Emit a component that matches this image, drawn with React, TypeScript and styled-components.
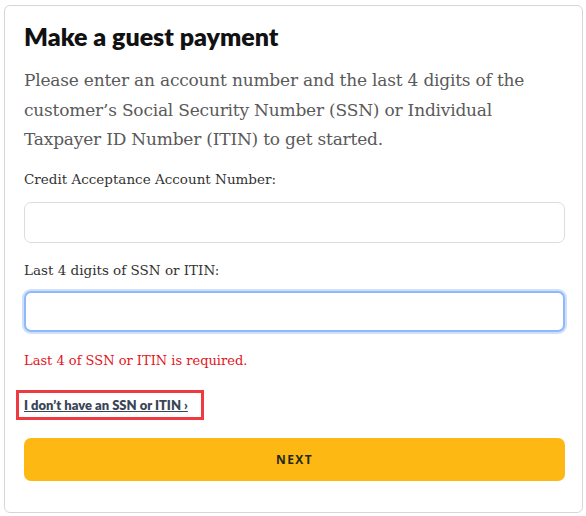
import React from 'react';
import styled, { createGlobalStyle } from 'styled-components';

const Global = createGlobalStyle`
  html, body { margin: 0; padding: 0; background: #ffffff; }
  * { box-sizing: border-box; }
`;

const Card = styled.div`
  width: 579px;
  height: 508px;
  margin: 5px 0 0 4px;
  border: 1px solid #d6d6d6;
  border-radius: 6px;
  padding: 15px 17px 0 19px;
  display: flex;
  flex-direction: column;
  background: #fff;
`;

const Title = styled.h1`
  margin: 0;
  font-family: 'Lato', 'Noto Sans', sans-serif;
  font-weight: 800;
  font-size: 25px;
  line-height: 30px;
  color: #111;
`;

const Intro = styled.p`
  margin: 15px 0 0 0;
  font-family: 'DejaVu Serif', 'Liberation Serif', serif;
  font-weight: 300;
  font-size: 17px;
  line-height: 29.5px;
  color: #5a5a5a;
  letter-spacing: -0.2px;
`;

const Label = styled.label<{ $top: number }>`
  display: block;
  font-family: 'DejaVu Serif', 'Liberation Serif', serif;
  font-size: 13.5px;
  line-height: 18px;
  color: #333;
  margin-top: ${({ $top }) => $top}px;
`;

const Input = styled.input<{ $focus?: boolean; $top: number }>`
  display: block;
  width: 100%;
  height: 41px;
  margin-top: ${({ $top }) => $top}px;
  border-radius: 7px;
  border: ${({ $focus }) => ($focus ? '2px solid #8fb9fb' : '1px solid #dcdde3')};
  box-shadow: ${({ $focus }) => ($focus ? '0 0 0 2px #cfe0fd' : 'none')};
  outline: none;
  background: #fff;
`;

const ErrorText = styled.div`
  margin-top: 20px;
  font-family: 'DejaVu Serif', 'Liberation Serif', serif;
  font-size: 13px;
  line-height: 18px;
  color: #e3141d;
`;

const LinkWrap = styled.div`
  margin-top: 20px;
  align-self: flex-start;
  margin-left: -8px;
  padding: 3px 13px 3px 5px;
  border: 3px solid #ee3b41;
`;

const HelpLink = styled.a`
  font-family: 'Lato', 'Noto Sans', sans-serif;
  font-weight: 800;
  font-size: 13px;
  line-height: 16px;
  color: #3a4657;
  text-decoration: underline;
`;

const NextButton = styled.button`
  margin-top: 18px;
  width: 100%;
  height: 43px;
  border: none;
  border-radius: 7px;
  background: #fdb813;
  font-family: 'Open Sans', 'Noto Sans', sans-serif;
  font-weight: 700;
  font-size: 12px;
  letter-spacing: 1.4px;
  color: #1f2a1a;
`;

export default function App() {
  return (
    <>
      <Global />
      <Card>
        <Title>Make a guest payment</Title>
        <Intro>
          Please enter an account number and the last 4 digits of the customer’s Social Security
          Number (SSN) or Individual Taxpayer ID Number (ITIN) to get started.
        </Intro>
        <Label $top={15}>Credit Acceptance Account Number:</Label>
        <Input $top={14} />
        <Label $top={18}>Last 4 digits of SSN or ITIN:</Label>
        <Input $top={12} $focus />
        <ErrorText>Last 4 of SSN or ITIN is required.</ErrorText>
        <LinkWrap>
          <HelpLink href="#">I don’t have an SSN or ITIN ›</HelpLink>
        </LinkWrap>
        <NextButton>NEXT</NextButton>
      </Card>
    </>
  );
}
